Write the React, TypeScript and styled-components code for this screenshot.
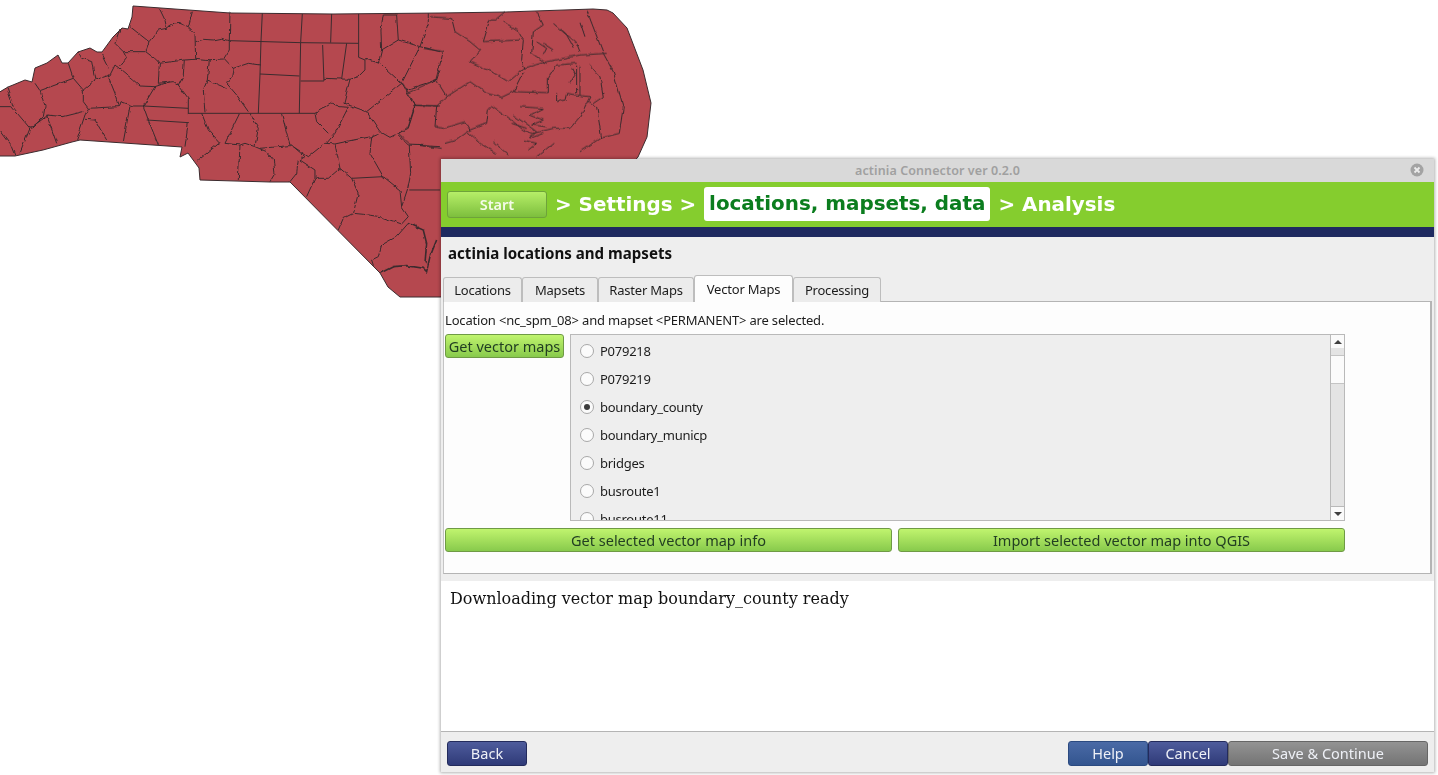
import React from "react";
import styled, { createGlobalStyle, css } from "styled-components";

const GlobalStyle = createGlobalStyle`
  html, body {
    margin: 0;
    padding: 0;
    background: #ffffff;
    overflow: hidden;
  }
  #root {
    height: 775px;
    position: relative;
  }
`;

const uiFont = `"Noto Sans", "Open Sans", sans-serif`;
const headFont = `"DejaVu Sans", sans-serif`;

const Page = styled.div`
  position: relative;
  width: 1438px;
  height: 775px;
  overflow: hidden;
  background: #fff;
`;

const MapCanvas = styled.svg`
  position: absolute;
  left: 0;
  top: 0;
  path {
    vector-effect: non-scaling-stroke;
    fill: none;
    stroke: #3b2b2e;
    stroke-width: 1;
  }
  path.land {
    fill: #b5484f;
  }
  path.thick {
    stroke-width: 1.6;
  }
`;

const Window = styled.div`
  position: absolute;
  left: 441px;
  top: 159px;
  width: 993px;
  height: 613px;
  display: flex;
  flex-direction: column;
  background: #eeeeee;
  box-shadow: 0 0 3px 1px rgba(0, 0, 0, 0.3);
  font-family: ${uiFont};
  font-size: 13px;
  color: #1c1c1c;
`;

const TitleBar = styled.div`
  height: 23px;
  flex: none;
  display: flex;
  align-items: center;
  justify-content: center;
  position: relative;
  background: #d9d9d9;
  color: #a0a0a0;
  font-weight: 600;
  font-size: 12.5px;
  letter-spacing: 0.1px;
`;

const CloseIcon = styled.svg`
  position: absolute;
  right: 10px;
  top: 4px;
`;

const WizardBar = styled.div`
  height: 45px;
  flex: none;
  display: flex;
  align-items: center;
  padding-left: 6px;
  background: #85cd2e;
  border-bottom: 10px solid #1f2a60;
  box-sizing: content-box;
`;

const StartButton = styled.div`
  width: 100px;
  height: 27px;
  box-sizing: border-box;
  display: flex;
  align-items: center;
  justify-content: center;
  padding-bottom: 1px;
  border: 1px solid #6ea33a;
  border-radius: 3px;
  background: linear-gradient(#b6ee68, #7dbf3d);
  color: #f4fbe8;
  font-weight: 600;
  font-size: 14.5px;
`;

const StepGroup = styled.div`
  display: flex;
  align-items: center;
  gap: 8px;
  margin: -1px 0 0 8px;
`;

const Step = styled.span<{ $current?: boolean }>`
  font-family: ${headFont};
  font-weight: 700;
  font-size: 19.9px;
  white-space: nowrap;
  color: #ffffff;
  ${(p) =>
    p.$current &&
    css`
      color: #0b7d1e;
      background: #ffffff;
      height: 34px;
      line-height: 33px;
      padding: 0 5px;
      border-radius: 3px;
    `}
`;

const Heading = styled.div`
  height: 38px;
  flex: none;
  display: flex;
  align-items: center;
  padding: 0 7px 6px;
  box-sizing: border-box;
  font-weight: 700;
  font-size: 15.1px;
  color: #111;
`;

const TabRow = styled.div`
  height: 27px;
  flex: none;
  display: flex;
  align-items: flex-end;
  padding-left: 2px;
  position: relative;
  z-index: 1;
`;

const Tab = styled.div<{ $w: number; $active?: boolean }>`
  width: ${(p) => p.$w}px;
  height: ${(p) => (p.$active ? 27 : 25)}px;
  box-sizing: border-box;
  display: flex;
  align-items: center;
  justify-content: center;
  letter-spacing: -0.2px;
  border: 1px solid #bdbdbd;
  border-bottom: none;
  border-radius: 3px 3px 0 0;
  background: ${(p) => (p.$active ? "#fdfdfd" : "#ececec")};
  padding-bottom: ${(p) => (p.$active ? 1 : 0)}px;
`;

const Panel = styled.div`
  height: 273px;
  flex: none;
  margin: -1px 2px 0 2px;
  padding: 9px 0 0 1px;
  box-sizing: border-box;
  background: #fdfdfd;
  border: 1px solid #b4b4b4;
  border-right-width: 2px;
  border-left-color: #c4c4c4;
`;

const SelectionNote = styled.div`
  height: 18px;
  line-height: 18px;
  white-space: nowrap;
  letter-spacing: -0.18px;
`;

const ListRow = styled.div`
  display: flex;
  width: 900px;
  margin-top: 5px;
  gap: 6px;
  align-items: flex-start;
`;

const GreenButton = styled.div<{ $grow?: boolean }>`
  box-sizing: border-box;
  height: 24px;
  padding: 0 3px 1px;
  display: flex;
  align-items: center;
  justify-content: center;
  white-space: nowrap;
  font-size: 14.5px;
  color: #223f22;
  border: 1px solid #6f9a45;
  border-radius: 3px;
  background: linear-gradient(#c0f46e, #88ca4c);
  ${(p) => p.$grow && "flex: 1;"}
`;

const GetMapsButton = styled(GreenButton)`
  width: 119px;
  flex: none;
`;

const MapList = styled.div`
  flex: 1;
  height: 187px;
  box-sizing: border-box;
  display: flex;
  border: 1px solid #b9b9b9;
  background: #eeeeee;
  overflow: hidden;
`;

const ListItems = styled.div`
  flex: 1;
  overflow: hidden;
  padding-top: 2px;
`;

const ListItem = styled.div`
  height: 28px;
  display: flex;
  align-items: center;
  padding-left: 9px;
  gap: 6px;
  white-space: nowrap;
  letter-spacing: -0.25px;
`;

const Radio = styled.span<{ $on?: boolean }>`
  width: 14px;
  height: 14px;
  box-sizing: border-box;
  flex: none;
  border: 1px solid #a8a8a8;
  border-radius: 50%;
  background: #fbfbfb;
  display: flex;
  align-items: center;
  justify-content: center;
  &::after {
    content: "";
    display: ${(p) => (p.$on ? "block" : "none")};
    width: 6px;
    height: 6px;
    border-radius: 50%;
    background: #3c3c3c;
  }
`;

const ScrollBar = styled.div`
  width: 13px;
  flex: none;
  display: flex;
  flex-direction: column;
  border-left: 1px solid #b9b9b9;
  background: #e4e4e4;
`;

const ScrollArrow = styled.div<{ $down?: boolean }>`
  height: 13px;
  flex: none;
  display: flex;
  align-items: center;
  justify-content: center;
  background: #fafafa;
  ${(p) => (p.$down ? "border-top: 1px solid #b9b9b9;" : "")}
  &::after {
    content: "";
    border-left: 4px solid transparent;
    border-right: 4px solid transparent;
    ${(p) =>
      p.$down
        ? "border-top: 4px solid #3f3f3f;"
        : "border-bottom: 4px solid #3f3f3f;"}
  }
`;

const ScrollGap = styled.div<{ $h?: number }>`
  ${(p) => (p.$h ? `height: ${p.$h}px; flex: none;` : "flex: 1;")}
`;

const ScrollThumb = styled.div`
  height: 27px;
  flex: none;
  background: #fbfbfb;
  border-top: 1px solid #c4c4c4;
  border-bottom: 1px solid #c4c4c4;
`;

const ActionRow = styled.div`
  display: flex;
  width: 900px;
  gap: 6px;
  margin-top: 7px;
`;

const Divider = styled.div`
  height: 7px;
  flex: none;
`;

const LogArea = styled.div`
  height: 151px;
  flex: none;
  padding: 8px 9px;
  box-sizing: border-box;
  background: #ffffff;
  border-bottom: 1px solid #b4b4b4;
  font-family: "DejaVu Serif", serif;
  font-size: 16px;
  line-height: 20px;
  color: #111;
`;

const Footer = styled.div`
  flex: 1;
  display: flex;
  align-items: flex-start;
  justify-content: space-between;
  padding: 9px 6px 0;
`;

const FooterGroup = styled.div`
  display: flex;
`;

const tones = {
  navy: { top: "#4e5c9c", bottom: "#2f3a78", border: "#232b5c" },
  blue: { top: "#4a6aa6", bottom: "#33558f", border: "#2b4a80" },
  grey: { top: "#939393", bottom: "#747474", border: "#666666" },
};

const FooterButton = styled.div<{ $tone: keyof typeof tones; $w: number }>`
  width: ${(p) => p.$w}px;
  height: 25px;
  box-sizing: border-box;
  display: flex;
  align-items: center;
  justify-content: center;
  padding-bottom: 1px;
  border-radius: 3px;
  font-size: 14.5px;
  color: #eef0f6;
  border: 1px solid ${(p) => tones[p.$tone].border};
  background: linear-gradient(${(p) => tones[p.$tone].top}, ${(p) => tones[p.$tone].bottom});
`;

const tabs = [
  { label: "Locations", w: 79 },
  { label: "Mapsets", w: 76 },
  { label: "Raster Maps", w: 96 },
  { label: "Vector Maps", w: 99, active: true },
  { label: "Processing", w: 88 },
];

const maps = ["P079218", "P079219", "boundary_county", "boundary_municp", "bridges", "busroute1", "busroute11"];

// state lines that are ruler straight on the real map, coordinates read off a 3x crop
const countyGrid = [
  "M787 40 L783 125 L780 225 L775 340",
  "M907 42 L902 128 L898 340",
  "M995 42 L992 128",
  "M1076 42 L1076 172",
  "M688 122 L902 128 L1076 130",
  "M780 222 L898 228",
  "M902 243 L972 243 L968 135",
  "M1040 130 L1025 237",
  "M565 340 L945 340",
  "M430 318 L565 325",
  "M440 360 L565 368",
  "M1150 530 L1055 535",
  "M1228 570 L1320 570",
  "M1240 317 L1320 318",
  "M400 318 L430 318",
];

const countyWest = [
  "M690 38 L688 122 L688 150 L672 175 L700 205 L695 230 L680 250 L710 285 L745 335",
  "M587 125 L610 118 L640 120 L665 115 L688 122",
  "M478 25 L495 60 L500 85",
  "M578 32 L565 80",
  "M500 85 L520 72 L540 70 L565 80 L585 100 L587 178",
  "M500 85 L475 90 L447 125 L390 80",
  "M447 125 L437 155 L370 155 L345 130 L360 90",
  "M437 155 L470 180 L478 190 L475 250 L520 245 L535 255",
  "M553 180 L587 178 L628 182 L672 180",
  "M478 190 L553 180 L550 225 L535 255 L565 295 L565 340",
  "M628 182 L622 240 L610 270 L615 337",
  "M622 240 L680 265",
  "M700 205 L745 190 L780 195",
  "M972 235 L1050 238 L1075 230 L1095 210 L1095 180 L1076 172",
  "M1050 238 L1032 310 L1100 335 L1205 250 L1140 190 L1095 178",
  "M1205 250 L1225 285 L1247 315 L1225 385 L1170 412 L1140 395 L1100 335",
  "M1205 250 L1260 140 L1285 70 L1285 40",
  "M1145 150 L1135 190",
  "M1145 150 L1195 120 L1190 45 L1150 45 L1143 90 L1145 150",
  "M1195 120 L1260 140 L1320 155",
  "M1215 270 L1310 240 L1320 210",
  "M1195 405 L1225 435 L1320 440",
  "M1228 435 L1232 520 L1222 570",
  "M1115 410 L1140 400",
  "M1115 410 L1110 460 L1150 530 L1200 570 L1205 620 L1225 650 L1205 672 L1140 650 L1090 643 L1060 640 L1075 580 L1055 535 L1020 505 L985 535 L945 535 L920 590",
  "M1205 620 L1222 570",
  "M1060 640 L1030 655 L1015 690",
  "M1225 670 L1190 710 L1145 735 L1135 770 L1115 780 L1120 795",
  "M1115 410 L1060 420 L1005 432 L975 430 L925 470 L880 440",
  "M1005 432 L1020 505",
  "M1045 322 L1005 400 L980 430",
  "M1045 322 L1020 320 L995 310 L945 340 L950 365 L985 400",
  "M845 342 L870 435 L880 440 L915 470 L900 480 L945 510 L945 535",
  "M780 445 L870 437",
  "M750 340 L775 385 L765 440 L800 455 L820 480 L825 520 L810 545",
  "M718 342 L675 430 L720 435 L715 540",
  "M605 340 L625 390 L660 428 L595 480",
  "M720 435 L735 430 L765 440",
  "M895 480 L890 520 L870 545",
  "M565 368 L555 440",
  "M430 318 L445 360 L475 435",
  "M390 318 L370 425",
  "M400 318 L360 305 L355 320 L265 325 L255 345 L230 420",
  "M250 335 L190 350 L140 345 L170 430",
  "M145 345 L90 385 L60 460",
  "M255 358 L285 360 L320 420",
  "M430 318 L465 260 L510 245",
  "M345 195 L330 225 L285 240 L250 270 L250 305 L265 325",
  "M355 320 L345 280 L325 230",
  "M345 195 L400 240 L420 258 L465 260",
  "M370 155 L380 175 L360 200",
  "M305 165 L325 205",
  "M235 155 L245 175 L275 185 L285 240",
  "M205 190 L220 235 L250 270",
  "M220 235 L120 272 L105 250",
  "M120 272 L135 320 L130 350 L95 385",
  "M0 320 L35 320 L90 385",
  "M20 262 L40 320",
  "M0 390 L30 430 L45 467",
];

const countyEast = [
  "M150 50 L215 55 L225 95 L270 125 L300 150 L270 185 L335 215 L385 245 L410 225 L430 205",
  "M375 35 L345 60 L330 60 L310 125 L420 120",
  "M370 65 L415 95 L430 120 L425 180 L435 205",
  "M470 35 L490 75 L460 95 L455 160 L500 190",
  "M430 205 L500 185 L600 165 L680 160",
  "M190 155 L130 145",
  "M190 155 L168 238 L200 290 L270 245 L320 280 L365 292 L400 275 L505 278",
  "M400 275 L430 215",
  "M170 238 L85 278 L105 315 L170 318 L200 290",
  "M65 245 L85 278",
  "M105 315 L85 380 L55 400 L90 432 L185 445",
  "M170 318 L165 380 L190 385 L255 365 L270 390 L320 370 L325 330 L335 320",
  "M270 390 L230 420 L195 430",
  "M260 395 L300 430 L350 460",
  "M335 320 L400 365 L430 390 L460 400 L520 385 L570 385 L600 350 L625 300 L630 290 L590 285 L560 280 L555 300 L530 305 L530 280",
  "M625 305 L650 320 L665 415",
  "M505 278 L505 235 L530 195 L590 190",
  "M620 30 L670 160 L700 215 L730 320 L718 400 L660 415 L600 455",
  "M590 200 L590 280",
  "M600 200 L600 285",
  "M630 195 L660 230 L670 290 L640 310",
  "M520 430 L470 470",
  "M420 320 L490 325 L450 345 L490 360 L455 375 L500 380",
  "M400 345 L470 395 L450 415 L490 400",
  "M340 425 L385 465",
  "M395 370 L440 385",
  "M430 420 L470 430 L445 450",
  "M490 130 L520 150",
  "M540 85 L590 130 L600 155",
  "M600 65 L615 110",
  "M575 205 L585 225 L570 250",
  "M470 125 L500 145 L490 165",
  "M520 70 L560 105 L580 140",
];

const App: React.FC = () => {
  return (
    <Page>
      <GlobalStyle />
      <MapCanvas width={700} height={310} viewBox="0 0 700 310">
        <defs>
          <filter id="wobble" x="-5%" y="-5%" width="110%" height="110%" filterUnits="objectBoundingBox">
            <feTurbulence type="fractalNoise" baseFrequency="0.14" numOctaves="2" seed="4" />
            <feDisplacementMap in="SourceGraphic" scale="3.5" xChannelSelector="R" yChannelSelector="G" />
          </filter>
        </defs>
        <path
          className="land"
          d="M-2 93 L8 87 L13 85 L25 80 L32 82 L35 68 L47 63 L58 55 L62 63 L68 63 L78 52 L90 48 L97 52 L102 52 L113 37 L122 28 L128 29 L132 17 L133 6 L230 13 L333 14 L440 13 L506 12 L593 9 L607 10 L613 13 L627 28 L643 70 L651 103 L647 137 L638 157 L600 200 L500 290 L440 297 L400 297 L388 287 L380 273 L290 182 L270 182 L200 180 L199 168 L188 153 L180 157 L182 147 L80 140 L72 142 L43 150 L15 156 L-2 156 Z"
        />
        <g transform="scale(0.3333)">
          {countyGrid.map((d) => (
            <path key={d} d={d} />
          ))}
        </g>
        <g filter="url(#wobble)">
          <g transform="scale(0.3333)">
            {countyWest.map((d) => (
              <path key={d} d={d} />
            ))}
            <path className="thick" d="M1140 820 L1180 800 L1220 797 L1270 805 L1280 815 L1290 770 L1310 720" />
            <path className="thick" d="M1225 670 L1270 690 L1280 730 L1275 790" />
          </g>
          <g transform="translate(380 0) scale(0.3333)">
            {countyEast.map((d) => (
              <path key={d} d={d} />
            ))}
          </g>
        </g>
      </MapCanvas>

      <Window>
        <TitleBar>
          actinia Connector ver 0.2.0
          <CloseIcon width="14" height="14" viewBox="0 0 14 14">
            <circle cx="7" cy="7" r="6.5" fill="#a3a3a3" />
            <path d="M4.5 4.5 L9.5 9.5 M9.5 4.5 L4.5 9.5" stroke="#ececec" strokeWidth="1.8" />
          </CloseIcon>
        </TitleBar>

        <WizardBar>
          <StartButton>Start</StartButton>
          <StepGroup>
            <Step>&gt; Settings &gt;</Step>
            <Step $current>locations, mapsets, data</Step>
            <Step>&gt; Analysis</Step>
          </StepGroup>
        </WizardBar>

        <Heading>actinia locations and mapsets</Heading>

        <TabRow>
          {tabs.map((t) => (
            <Tab key={t.label} $w={t.w} $active={t.active}>
              {t.label}
            </Tab>
          ))}
        </TabRow>

        <Panel>
          <SelectionNote>Location &lt;nc_spm_08&gt; and mapset &lt;PERMANENT&gt; are selected.</SelectionNote>
          <ListRow>
            <GetMapsButton>Get vector maps</GetMapsButton>
            <MapList>
              <ListItems>
                {maps.map((m) => (
                  <ListItem key={m}>
                    <Radio $on={m === "boundary_county"} />
                    {m}
                  </ListItem>
                ))}
              </ListItems>
              <ScrollBar>
                <ScrollArrow />
                <ScrollGap $h={7} />
                <ScrollThumb />
                <ScrollGap />
                <ScrollArrow $down />
              </ScrollBar>
            </MapList>
          </ListRow>
          <ActionRow>
            <GreenButton $grow>Get selected vector map info</GreenButton>
            <GreenButton $grow>Import selected vector map into QGIS</GreenButton>
          </ActionRow>
        </Panel>

        <Divider />
        <LogArea>Downloading vector map boundary_county ready</LogArea>

        <Footer>
          <FooterButton $tone="navy" $w={80}>
            Back
          </FooterButton>
          <FooterGroup>
            <FooterButton $tone="blue" $w={80}>
              Help
            </FooterButton>
            <FooterButton $tone="navy" $w={80}>
              Cancel
            </FooterButton>
            <FooterButton $tone="grey" $w={200}>
              Save &amp; Continue
            </FooterButton>
          </FooterGroup>
        </Footer>
      </Window>
    </Page>
  );
};

export default App;
